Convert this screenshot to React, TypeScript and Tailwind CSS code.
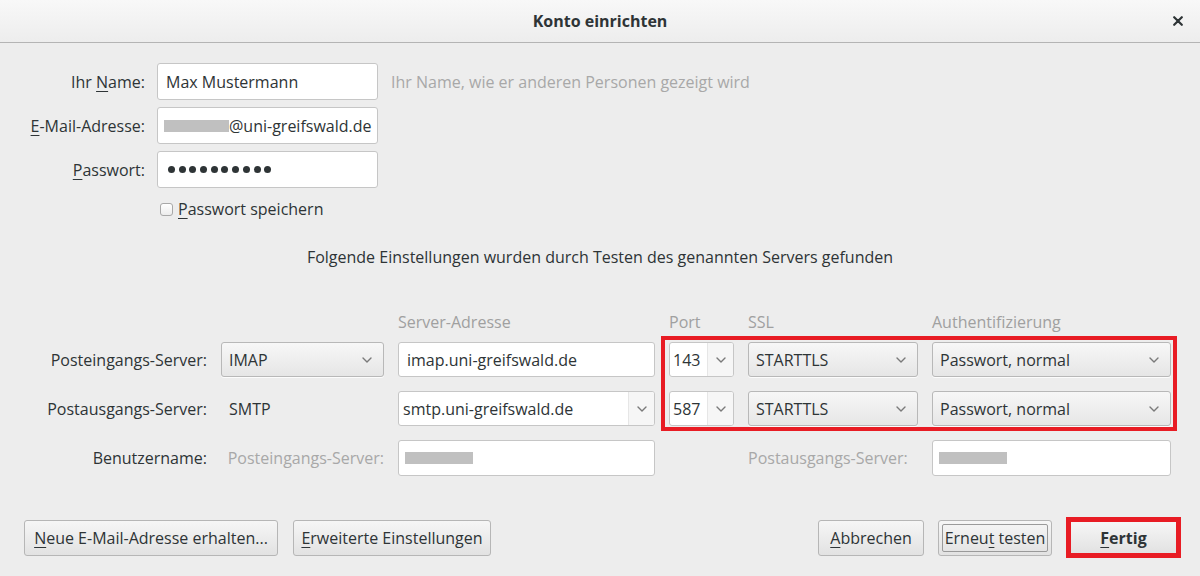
import React from 'react';

const font = { fontFamily: '"Open Sans", "Noto Sans", "DejaVu Sans", sans-serif' };

const cols = 'grid grid-cols-[207px_163px_257px_65px_170px_239px] gap-x-[14px]';

function Chevron() {
  return (
    <svg width="10" height="6" viewBox="0 0 10 6" className="shrink-0">
      <path d="M1 1l4 4 4-4" fill="none" stroke="#7a7a7a" strokeWidth="1.4" strokeLinecap="round" strokeLinejoin="round" />
    </svg>
  );
}

function Mn({ children }: { children: React.ReactNode }) {
  return <span className="underline decoration-1 underline-offset-[3px]">{children}</span>;
}

function Redacted({ w }: { w: string }) {
  return <span className={`inline-block h-[12px] shrink-0 bg-[#c0c0c0] ${w}`} />;
}

function Select({ value }: { value: string }) {
  return (
    <div className="flex h-[35px] items-center justify-between rounded-[3px] border border-[#b8b8b8] bg-gradient-to-b from-[#f7f7f7] to-[#e6e6e6] pl-[7px] pr-[11px] text-[#2e3436] shadow-[0_1px_0_rgba(255,255,255,0.8)]">
      <span className="whitespace-nowrap">{value}</span>
      <Chevron />
    </div>
  );
}

function Entry({ children, className = '' }: { children?: React.ReactNode; className?: string }) {
  return (
    <div
      className={`flex items-center overflow-hidden whitespace-nowrap rounded-[3px] border border-[#c6c6c6] bg-white text-[#2e3436] ${className}`}
    >
      {children}
    </div>
  );
}

function Combo({ value, textPad }: { value: string; textPad: string }) {
  return (
    <div className="flex h-[35px] overflow-hidden rounded-[3px] border border-[#c6c6c6] bg-white text-[#2e3436]">
      <div className={`flex min-w-0 flex-1 items-center whitespace-nowrap ${textPad}`}>{value}</div>
      <div className="flex w-[26px] shrink-0 items-center justify-center border-l border-[#e6e6e6] bg-[#f6f6f6]">
        <Chevron />
      </div>
    </div>
  );
}

function Btn({ children, className = '' }: { children: React.ReactNode; className?: string }) {
  return (
    <div
      className={`flex items-center justify-center rounded-[3px] border border-[#b6b6b6] bg-gradient-to-b from-[#f6f6f6] to-[#e2e2e2] text-[#2e3436] whitespace-nowrap ${className}`}
    >
      {children}
    </div>
  );
}

export default function App() {
  return (
    <div className="flex h-[576px] w-[1200px] flex-col overflow-hidden bg-[#ededed] text-[16px] leading-[20px] text-[#2e3436]" style={font}>
      <header className="flex h-[43px] shrink-0 items-center border-b border-[#b4b4b4] bg-gradient-to-b from-[#f8f8f8] to-[#ededed]">
        <div className="w-[40px]" />
        <h1 className="flex-1 text-center text-[16px] font-bold text-[#2e3436]">Konto einrichten</h1>
        <div className="flex w-[40px] justify-center pr-[4px]">
          <svg width="10" height="10" viewBox="0 0 10 10">
            <path d="M1.2 1.2l7.6 7.6M8.8 1.2L1.2 8.8" stroke="#2e3436" strokeWidth="2.2" strokeLinecap="round" />
          </svg>
        </div>
      </header>

      <main className="flex flex-1 flex-col pt-[20px]">
        <div className="flex flex-col gap-[7px]">
          <div className="flex items-center">
            <label className="w-[145px] text-right">
              Ihr <Mn>N</Mn>ame:
            </label>
            <Entry className="ml-[12px] h-[37px] w-[221px] pl-[8px]">Max Mustermann</Entry>
            <span className="ml-[13px] text-[#a8a8a8]">Ihr Name, wie er anderen Personen gezeigt wird</span>
          </div>
          <div className="flex items-center">
            <label className="w-[145px] text-right">
              <Mn>E</Mn>-Mail-Adresse:
            </label>
            <Entry className="ml-[12px] h-[37px] w-[221px] pl-[6px]">
              <Redacted w="w-[65px]" />
              <span>@uni-greifswald.de</span>
            </Entry>
          </div>
          <div className="flex items-center">
            <label className="w-[145px] text-right">
              <Mn>P</Mn>asswort:
            </label>
            <Entry className="ml-[12px] h-[37px] w-[221px] gap-[3.7px] pl-[10px]">
              {Array.from({ length: 10 }).map((_, i) => (
                <span key={i} className="h-[7px] w-[7px] rounded-full bg-[#2e3436]" />
              ))}
            </Entry>
          </div>
        </div>

        <div className="mt-[11px] flex items-center pl-[160px]">
          <span className="h-[13px] w-[13px] rounded-[3px] border border-[#a8a8a8] bg-gradient-to-b from-white to-[#ececec]" />
          <span className="ml-[5px]">
            <Mn>P</Mn>asswort speichern
          </span>
        </div>

        <p className="mt-[28px] text-center">
          Folgende Einstellungen wurden durch Testen des genannten Servers gefunden
        </p>

        <div className={`${cols} mt-[45px] text-[#a0a0a0]`}>
          <div />
          <div />
          <div>Server-Adresse</div>
          <div>Port</div>
          <div>SSL</div>
          <div>Authentifizierung</div>
        </div>

        <div className={`${cols} relative mt-[10px] grid-rows-[35px_35px_36px] gap-y-[14px]`}>
          <div className="flex items-center justify-end">Posteingangs-Server:</div>
          <Select value="IMAP" />
          <Entry className="h-[35px] pl-[8px]">imap.uni-greifswald.de</Entry>
          <Combo value="143" textPad="pl-[3px]" />
          <Select value="STARTTLS" />
          <Select value="Passwort, normal" />

          <div className="flex items-center justify-end">Postausgangs-Server:</div>
          <div className="flex items-center pl-[8px]">SMTP</div>
          <Combo value="smtp.uni-greifswald.de" textPad="pl-[4px]" />
          <Combo value="587" textPad="pl-[3px]" />
          <Select value="STARTTLS" />
          <Select value="Passwort, normal" />

          <div className="flex items-center justify-end">Benutzername:</div>
          <div className="flex items-center justify-end whitespace-nowrap text-[#a8a8a8]">Posteingangs-Server:</div>
          <Entry className="h-[36px] pl-[6px]">
            <Redacted w="w-[68px]" />
          </Entry>
          <div />
          <div className="flex items-center whitespace-nowrap text-[#a8a8a8]">Postausgangs-Server:</div>
          <Entry className="h-[36px] pl-[6px]">
            <Redacted w="w-[68px]" />
          </Entry>

          {/* annotation box over port / ssl / auth */}
          <div className="pointer-events-none absolute left-[661px] top-[-6px] h-[95px] w-[516px] border-4 border-[#e81c24]" />
        </div>

        <div className="mt-[41px] flex items-center justify-between pl-[24px] pr-[19px]">
          <div className="flex gap-[15px]">
            <Btn className="h-[36px] w-[254px]">
              <span>
                <Mn>N</Mn>eue E-Mail-Adresse erhalten...
              </span>
            </Btn>
            <Btn className="h-[36px] w-[198px]">
              <span>
                <Mn>E</Mn>rweiterte Einstellungen
              </span>
            </Btn>
          </div>
          <div className="flex items-center gap-[14px]">
            <Btn className="h-[36px] w-[106px]">
              <span>
                <Mn>A</Mn>bbrechen
              </span>
            </Btn>
            <Btn className="h-[36px] w-[114px] p-[3px]">
              <span className="flex h-full w-full items-center justify-center rounded-[2px] border border-[#9a9a9a]">
                <span>
                  Erneu<Mn>t</Mn> testen
                </span>
              </span>
            </Btn>
            <Btn className="h-[41px] w-[115px] rounded-none border-[5px] border-[#e81c24] font-bold">
              <span>
                <Mn>F</Mn>ertig
              </span>
            </Btn>
          </div>
        </div>
      </main>
    </div>
  );
}
